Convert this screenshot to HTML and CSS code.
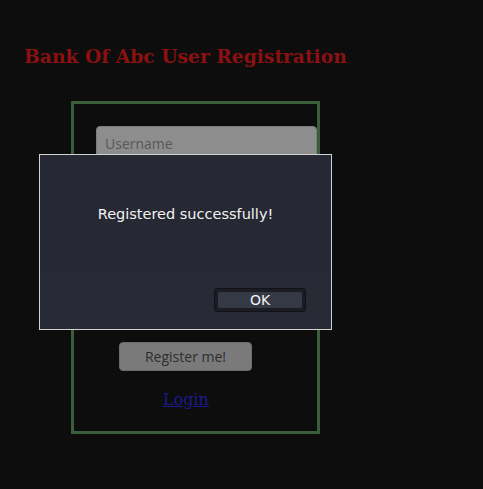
FILE: index.html
```html
<!DOCTYPE html>
<html>
<head>
<meta charset="utf-8">
<link rel="stylesheet" href="styles.css">
</head>
<body>
<h3 class="title">Bank Of Abc User Registration</h3>
<div class="box">
  <input class="field" type="text" placeholder="Username">
  <input class="field" type="password" placeholder="Password">
  <input class="field" type="password" placeholder="Confirm password">
  <button class="register">Register me!</button>
  <a class="login" href="#">Login</a>
</div>
<div class="dialog">
  <div class="dialog-body">Registered successfully!</div>
  <div class="dialog-foot"><button class="ok"><span>OK</span></button></div>
</div>
</body>
</html>
```
FILE: styles.css
```css
html, body { margin: 0; padding: 0; }
body {
  background: #0d0d0d;
  width: 483px;
  height: 489px;
  position: relative;
  overflow: hidden;
  font-family: "DejaVu Serif", serif;
}
.title {
  margin: 0;
  padding: 45px 0 0 24px;
  height: 57px;
  box-sizing: border-box;
  font-family: "DejaVu Serif", serif;
  font-weight: bold;
  font-size: 18.7px;
  color: #8b1111;
  line-height: 22px;
}
.box {
  margin: 44px 0 0 71px;
  width: 249px;
  height: 333px;
  box-sizing: border-box;
  border: 3px solid #3a5d3a;
  display: flex;
  flex-direction: column;
  align-items: flex-start;
  padding: 22px 0 0 22px;
}
.field {
  width: 221px;
  height: 34px;
  box-sizing: border-box;
  background: #8d8d8d;
  border: 1px solid #7c7c7c;
  border-radius: 4px;
  padding: 0 8px;
  font-family: "Open Sans", "DejaVu Sans", sans-serif;
  font-size: 14px;
  color: #333;
  margin-bottom: 18px;
}
.field::placeholder { color: #585858; }
.register {
  margin: 60px 0 0 23px;
  width: 133px;
  height: 29px;
  background: #7a7a7a;
  border: 1px solid #6c6c6c;
  border-radius: 4px;
  font-family: "Open Sans", "DejaVu Sans", sans-serif;
  font-size: 14px;
  color: #2e2e2e;
  padding: 0;
}
.login {
  margin: 19px 0 0 67px;
  font-family: "DejaVu Serif", serif;
  font-size: 16px;
  color: #1a1a8c;
  text-decoration: underline;
}
.dialog {
  position: absolute;
  left: 39px;
  top: 154px;
  width: 293px;
  height: 176px;
  box-sizing: border-box;
  border: 1px solid #d2d2d2;
  background: #262833;
  display: flex;
  flex-direction: column;
}
.dialog-body {
  height: 118px;
  box-sizing: border-box;
  padding-top: 51px;
  text-align: center;
  font-family: "DejaVu Sans", sans-serif;
  font-size: 14.5px;
  color: #f2f2f2;
}
.dialog-foot {
  flex: 1;
  background: #282a35;
  display: flex;
  justify-content: flex-end;
  align-items: flex-start;
  padding: 15px 25px 0 0;
}
.ok {
  width: 92px;
  height: 24px;
  box-sizing: border-box;
  background: #1b1c23;
  border: 1px solid #121318;
  border-radius: 3px;
  padding: 3px;
  display: flex;
}
.ok span {
  flex: 1;
  background: #353845;
  border-radius: 2px;
  font-family: "DejaVu Sans", sans-serif;
  font-size: 14px;
  color: #f2f2f2;
  line-height: 16px;
  display: flex;
  align-items: center;
  justify-content: center;
}
```
